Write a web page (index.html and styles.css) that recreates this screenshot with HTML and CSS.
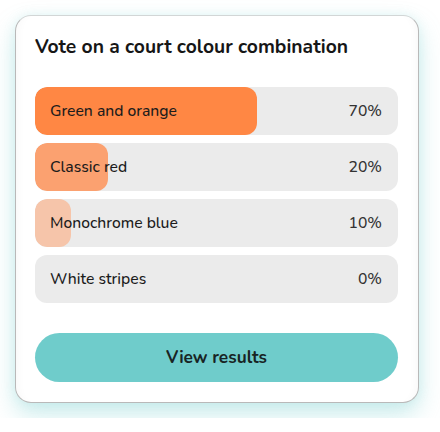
FILE: index.html
```html
<!DOCTYPE html>
<html lang="en">

<head>
    <meta charset="UTF-8">
    <meta name="viewport" content="width=device-width, initial-scale=1.0">
    <title>court colour poll</title>
    <link rel="stylesheet" href="styles.css">
</head>

<body>
    <div class="poll-card">
        <h2 class="poll-title">Vote on a court colour combination</h2>
        <ul class="poll-options">
            <li class="poll-option">
                <div class="poll-bar bar-1" style="width: 222px;"></div>
                <span class="poll-label">Green and orange</span>
                <span class="poll-pct">70%</span>
            </li>
            <li class="poll-option">
                <div class="poll-bar bar-2" style="width: 73px;"></div>
                <span class="poll-label">Classic red</span>
                <span class="poll-pct">20%</span>
            </li>
            <li class="poll-option">
                <div class="poll-bar bar-3" style="width: 36px;"></div>
                <span class="poll-label">Monochrome blue</span>
                <span class="poll-pct">10%</span>
            </li>
            <li class="poll-option">
                <span class="poll-label">White stripes</span>
                <span class="poll-pct">0%</span>
            </li>
        </ul>
        <button class="poll-button">View results</button>
    </div>
</body>

</html>
```

FILE: styles.css
```css
body {
    margin: 0;
    padding: 15px;
    background: #ffffff;
    font-family: "Nunito", "Lato", "Noto Sans", sans-serif;
    color: #1c1c1c;
}

.poll-card {
    box-sizing: border-box;
    width: 404px;
    height: 388px;
    padding: 19px 20px 20px 19px;
    background: #ffffff;
    border: 1px solid #b9b9b9;
    border-top-color: #d2d6d6;
    border-radius: 16px;
    box-shadow: 0 12px 24px rgba(110, 204, 203, 0.35), 0 0 12px rgba(110, 204, 203, 0.15), inset 10px 0 8px -8px rgba(0, 0, 0, 0.03), inset -10px 0 8px -8px rgba(0, 0, 0, 0.03);
}

.poll-title {
    margin: 0;
    font-size: 19.3px;
    line-height: 24px;
    font-weight: 700;
    color: #161616;
}

.poll-options {
    list-style: none;
    margin: 28px 0 0 0;
    padding: 0;
    display: flex;
    flex-direction: column;
    gap: 8px;
}

.poll-option {
    position: relative;
    overflow: hidden;
    height: 48px;
    display: flex;
    align-items: center;
    justify-content: space-between;
    padding: 0 16px 0 15px;
    background: #ebebeb;
    border-radius: 12px;
    font-size: 15.7px;
    font-weight: 500;
}

.poll-bar {
    position: absolute;
    left: 0;
    top: 0;
    bottom: 0;
    border-radius: 12px;
}

.bar-1 {
    background: #ff8744;
}

.bar-2 {
    background: #fba170;
}

.bar-3 {
    background: #f6c5aa;
}

.poll-label,
.poll-pct {
    position: relative;
}

.poll-pct {
    color: #333333;
}

.poll-button {
    display: block;
    width: 100%;
    height: 49px;
    margin-top: 30px;
    border: none;
    border-radius: 25px;
    background: #6fcccb;
    font-family: inherit;
    font-size: 17.3px;
    font-weight: 700;
    color: #182424;
    cursor: pointer;
}
```
